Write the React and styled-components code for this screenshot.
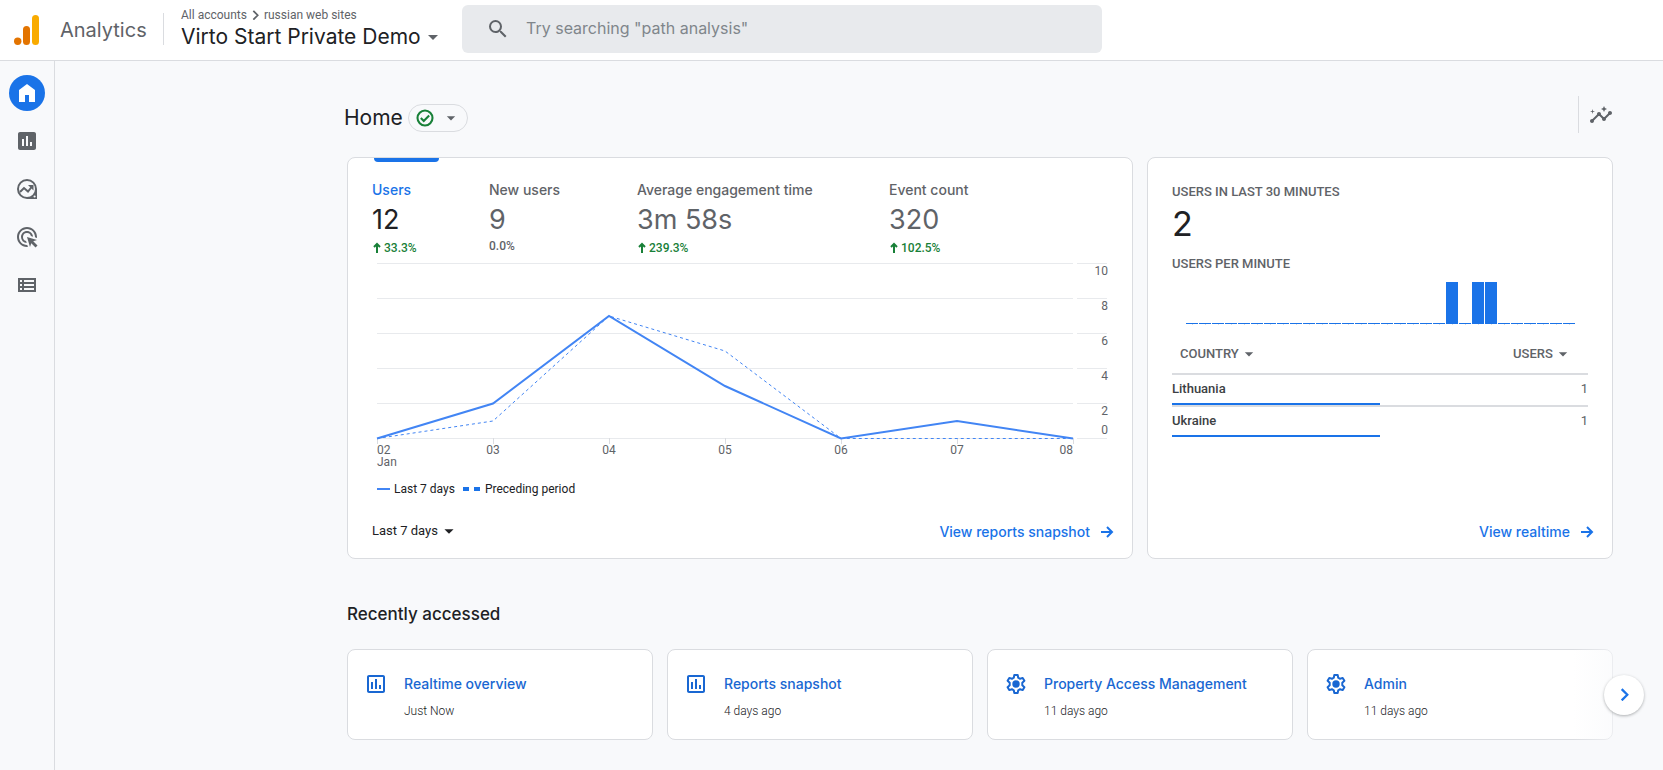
import React, { useState } from "react";
import styled, { createGlobalStyle } from "styled-components";
import {
  MdAdsClick,
  MdArrowDropDown,
  MdAssessment,
  MdInsights,
  MdOutlineAssessment,
  MdSearch
} from "react-icons/md";

const GlobalStyle = createGlobalStyle`
  * {
    box-sizing: border-box;
  }
  body {
    margin: 0;
    background: #f8f9fb;
    color: #202124;
    font-family: Roboto, sans-serif;
    font-size: 12px;
    line-height: 16px;
  }
  button, input, select {
    font: inherit;
    color: inherit;
    background: none;
    border: 0;
    padding: 0;
    margin: 0;
  }
  button {
    cursor: pointer;
  }
  svg {
    display: block;
    flex-shrink: 0;
  }
`;

const display = "Inter, Roboto, sans-serif";

/* header */

const Header = styled.header`
  display: flex;
  align-items: flex-start;
  height: 61px;
  padding-left: 14px;
  background: #fff;
  border-bottom: 1px solid #dadce0;
`;

const Brand = styled.a`
  display: flex;
  align-items: center;
  gap: 20px;
  width: 149px;
  height: 59px;
  flex-shrink: 0;
  color: #5f6368;
  font-family: ${display};
  font-size: 20px;
  text-decoration: none;
`;

const Account = styled.div`
  width: 274px;
  height: 32px;
  margin: 13px 25px 0 0;
  padding-left: 17px;
  border-left: 1px solid #dadce0;
  flex-shrink: 0;
`;

const Crumbs = styled.nav`
  display: flex;
  align-items: center;
  gap: 5px;
  margin-top: -6px;
  color: #5f6368;

  a {
    color: inherit;
    text-decoration: none;
  }
`;

const PropertyButton = styled.button`
  display: flex;
  align-items: center;
  font-family: ${display};
  font-size: 21px;
  line-height: 28px;
  white-space: nowrap;

  svg {
    color: #5f6368;
  }
`;

const SearchBox = styled.label`
  display: flex;
  align-items: center;
  gap: 16px;
  flex: 0 1 640px;
  height: 48px;
  margin-top: 5px;
  padding: 0 24px;
  border-radius: 6px;
  background: #e8eaed;
  color: #5f6368;
`;

const SearchInput = styled.input`
  flex: 1;
  min-width: 0;
  height: 44px;
  padding-bottom: 3px;
  font-family: ${display};
  font-size: 16px;
  outline: none;

  &::placeholder {
    color: #80868b;
    opacity: 1;
  }
`;

/* page */

const Layout = styled.div`
  display: flex;
  min-height: calc(100vh - 61px);
`;

const Sidebar = styled.nav`
  display: flex;
  flex-direction: column;
  align-items: center;
  gap: 12px;
  width: 55px;
  padding-top: 14px;
  border-right: 1px solid #dadce0;
  flex-shrink: 0;
`;

const NavLink = styled.a`
  display: flex;
  align-items: center;
  justify-content: center;
  width: 36px;
  height: 36px;
  border-radius: 50%;
  color: ${props => (props.$active ? "#fff" : "#5f6368")};
  background: ${props => (props.$active ? "#1a73e8" : "none")};
`;

const Main = styled.main`
  flex: 1;
  min-width: 0;
  padding: 35px 50px 30px 289px;
`;

const TitleRow = styled.div`
  display: flex;
  justify-content: space-between;
  height: 61px;
`;

const TitleGroup = styled.div`
  display: flex;
  align-items: center;
  gap: 5px;
  height: 44px;
`;

const PageTitle = styled.h1`
  margin: 0;
  font-family: ${display};
  font-size: 21px;
  font-weight: 400;
  line-height: 28px;
`;

const StatusButton = styled.button`
  display: flex;
  align-items: center;
  justify-content: space-between;
  width: 60px;
  height: 28px;
  padding: 0 6px;
  border: 1px solid #dadce0;
  border-radius: 14px;
  color: #5f6368;
`;

const InsightsButton = styled.button`
  height: 37px;
  padding-left: 10px;
  border-left: 1px solid #dadce0;
  color: #5f6368;
`;

const Cards = styled.div`
  display: grid;
  grid-template-columns: minmax(0, 786fr) minmax(0, 466fr);
  gap: 14px;
  margin-left: 3px;
`;

const Card = styled.section`
  display: flex;
  flex-direction: column;
  min-height: 402px;
  border: 1px solid #dadce0;
  border-radius: 8px;
  background: #fff;
`;

const CardBody = styled.div`
  flex: 1;
  padding: 0 24px;
`;

const CardFooter = styled.div`
  display: flex;
  justify-content: space-between;
  align-items: flex-start;
  padding: 0 16px 14px 24px;
`;

const CardLink = styled.a`
  display: flex;
  align-items: center;
  gap: 8px;
  margin-left: auto;
  color: #1a73e8;
  font-family: ${display};
  font-size: 14px;
  font-weight: 500;
  line-height: 24px;
  text-decoration: none;
`;

const SelectWrap = styled.span`
  display: inline-flex;
  align-items: center;

  select {
    appearance: none;
    outline: none;
  }
`;

const RangeSelect = styled(SelectWrap)`
  font-size: 13px;
  line-height: 20px;
`;

/* overview card */

const ActiveTab = styled.div`
  width: 65px;
  height: 4px;
  margin-left: 2px;
  border-radius: 0 0 4px 4px;
  background: #1a73e8;
`;

const Metrics = styled.div`
  display: grid;
  grid-template-columns: 117px 148px 252px auto;
  padding-top: 18px;
`;

const Metric = styled.button`
  display: flex;
  flex-direction: column;
  align-items: flex-start;
  color: #5f6368;
  text-align: left;
  white-space: nowrap;
`;

const MetricLabel = styled.span`
  color: ${props => (props.$active ? "#1a73e8" : "#5f6368")};
  font-family: ${display};
  font-size: 14px;
  font-weight: 500;
  line-height: 20px;
`;

const MetricValue = styled.span`
  padding-top: 2px;
  color: ${props => (props.$active ? "#202124" : "#5f6368")};
  font-family: ${display};
  font-size: 27px;
  line-height: 36px;
`;

const Delta = styled.span`
  display: flex;
  align-items: center;
  gap: 2px;
  padding-top: ${props => (props.$up ? "2px" : "0")};
  color: ${props => (props.$up ? "#188038" : "#5f6368")};
  font-weight: 500;
`;

const Chart = styled.svg`
  width: 100%;
  overflow: visible;

  text {
    fill: #5f6368;
    font-family: Roboto, sans-serif;
    font-size: 12px;
  }
`;

const Legend = styled.div`
  display: flex;
  align-items: center;
  gap: 4px;
  margin: 11px 0 0 5px;
`;

const LegendItem = styled.span`
  display: flex;
  align-items: center;
  gap: 4px;
  margin-right: 4px;
`;

/* realtime card */

const Caption = styled.h2`
  margin: 0;
  padding-top: ${props => (props.$first ? "26px" : "12px")};
  color: #5f6368;
  font-size: 13px;
  font-weight: 500;
  line-height: 16px;
  text-transform: uppercase;
`;

const BigNumber = styled.div`
  margin-top: 4px;
  font-family: ${display};
  font-size: 34px;
  line-height: 40px;
`;

const Minutes = styled.div`
  padding: 10px 12px 0 14px;

  svg {
    width: 100%;
  }
`;

const CountryTable = styled.table`
  width: 100%;
  margin-top: 10px;
  border-spacing: 0;
  font-size: 13px;

  th, td {
    padding: 0;
    text-align: left;
  }
  th:last-child, td:last-child {
    text-align: right;
  }
`;

const HeadCell = styled.th`
  height: 40px;
  border-bottom: 2px solid #dadce0;
  color: #5f6368;
  font-weight: 500;

  ${SelectWrap} {
    margin: 0 15px 0 8px;
  }
`;

const CountryRow = styled.tr`
  background-image: linear-gradient(#1a73e8, #1a73e8);
  background-position: 0 28px;
  background-repeat: no-repeat;

  td {
    height: 32px;
    padding: 6px 0 8px;
    border-bottom: 2px solid #dadce0;
    color: #3c4043;
    font-weight: 500;
  }
  td:last-child {
    color: #5f6368;
    font-weight: 400;
  }
  &:last-child td {
    height: 30px;
    border-bottom: 0;
  }
`;

/* recently accessed */

const SectionTitle = styled.h2`
  margin: 43px 0 23px 3px;
  font-family: ${display};
  font-size: 17px;
  font-weight: 500;
  line-height: 24px;
`;

const Recent = styled.div`
  position: relative;
  display: grid;
  grid-template-columns: repeat(4, minmax(0, 1fr));
  gap: 14px;
  margin-left: 3px;

  &::after {
    content: "";
    position: absolute;
    top: 0;
    right: 0;
    bottom: 0;
    width: 40px;
    background: linear-gradient(90deg, rgba(248, 249, 251, 0), rgba(248, 249, 251, 0.6));
    pointer-events: none;
  }
`;

const RecentCard = styled.a`
  display: flex;
  gap: 16px;
  padding: 22px 16px 20px;
  border: 1px solid #dadce0;
  border-radius: 8px;
  background: #fff;
  color: #1967d2;
  text-decoration: none;
`;

const RecentName = styled.div`
  font-family: ${display};
  font-size: 14px;
  font-weight: 500;
  line-height: 24px;
`;

const RecentTime = styled.div`
  margin-top: 7px;
  color: #202124;
  font-weight: 300;
`;

const NextButton = styled.button`
  position: absolute;
  z-index: 1;
  top: 50%;
  right: -31px;
  display: flex;
  align-items: center;
  justify-content: center;
  width: 40px;
  height: 40px;
  margin-top: -20px;
  border-radius: 50%;
  background: #fff;
  color: #1a73e8;
  box-shadow: 0 1px 3px rgba(60, 64, 67, 0.4);
`;

/* icons */

const LogoIcon = () => (
  <svg width="26" height="30" viewBox="0 0 26 30">
    <rect x="18" y="0" width="7" height="30" rx="3.500" fill="#f9ab00" />
    <rect x="9" y="11" width="7" height="19" rx="3.500" fill="#e37400" />
    <circle cx="3.700" cy="26.300" r="3.700" fill="#e37400" />
  </svg>
);

const HomeIcon = () => (
  <svg width="24" height="24" viewBox="0 0 24 24" fill="currentColor">
    <path d="M4 21V9l8-6 8 6v12h-6v-7h-4v7z" />
  </svg>
);

const ExploreIcon = () => (
  <svg width="24" height="24" viewBox="0 0 24 24">
    <path
      fill="currentColor"
      fillRule="evenodd"
      d="M12 2a10 10 0 0 1 10 10v10H12a10 10 0 0 1 0-20zm0 2a8 8 0 1 0 0 16 8 8 0 0 0 0-16zm7.600 14.400a1.100 1.100 0 1 0 0 2.200 1.100 1.100 0 0 0 0-2.200z"
    />
    <path fill="none" stroke="currentColor" strokeWidth="2" d="M5 15l4-4 4 3.500 4-5" />
    <path fill="currentColor" d="M13 8h5.500v5.500z" />
  </svg>
);

const ListIcon = () => (
  <svg width="24" height="24" viewBox="0 0 24 24" fill="none" stroke="currentColor" strokeWidth="2">
    <path d="M4 6h16v12H4zM8 6v12M4 10h16M4 14h16" />
  </svg>
);

const CheckIcon = () => (
  <svg width="20" height="20" viewBox="0 0 24 24" fill="none" stroke="#188038" strokeWidth="2.500">
    <circle cx="12" cy="12" r="9" />
    <path d="M7 12l3.500 3.500L17 9" />
  </svg>
);

const UpIcon = () => (
  <svg width="10" height="12" viewBox="0 0 10 12" fill="none" stroke="currentColor" strokeWidth="2">
    <path d="M5 11V2M2 5l3-3 3 3" />
  </svg>
);

const ArrowIcon = () => (
  <svg width="18" height="18" viewBox="0 0 18 18" fill="none" stroke="currentColor" strokeWidth="2">
    <path d="M3 9h11M9 4l5 5-5 5" />
  </svg>
);

const ChevronIcon = ({ size }) => (
  <svg
    width={size}
    height={(size * 3) / 2}
    viewBox="0 0 8 12"
    fill="none"
    stroke="currentColor"
    strokeWidth="2"
  >
    <path d="M1.500 1l5 5-5 5" />
  </svg>
);

const GearIcon = () => (
  <svg width="24" height="24" viewBox="0 0 24 24">
    <path
      fill="none"
      stroke="currentColor"
      strokeWidth="2"
      strokeLinejoin="round"
      d="M10.300 3h3.400l.5 2.700 1.900 1.100 2.600-.9 1.700 2.900-2.100 1.900v2.600l2.100 1.900-1.700 2.900-2.600-.9-1.900 1.100-.5 2.700h-3.400l-.5-2.700-1.900-1.100-2.600.9-1.700-2.900 2.100-1.900v-2.600L3.600 8.800l1.700-2.900 2.600.9 1.900-1.100z"
    />
    <circle cx="12" cy="12" r="3.700" fill="currentColor" />
  </svg>
);

/* data */

const navItems = [
  { label: "Home", icon: <HomeIcon />, active: true },
  { label: "Reports", icon: <MdAssessment size={24} /> },
  { label: "Explore", icon: <ExploreIcon /> },
  { label: "Advertising", icon: <MdAdsClick size={24} /> },
  { label: "Library", icon: <ListIcon /> }
];

const metrics = [
  { label: "Users", value: "12", delta: "33.3%", up: true, active: true },
  { label: "New users", value: "9", delta: "0.0%" },
  { label: "Average engagement time", value: "3m 58s", delta: "239.3%", up: true },
  { label: "Event count", value: "320", delta: "102.5%", up: true }
];

const days = ["02", "03", "04", "05", "06", "07", "08"];
const current = [0, 2, 7, 3, 0, 1, 0];
const preceding = [0, 1, 7, 5, 0, 0, 0];
const scale = [10, 8, 6, 4, 2, 0];

const perMinute = Array.from({ length: 30 }, (_, i) => ([20, 22, 23].includes(i) ? 1 : 0));

const countries = [
  { name: "Lithuania", users: 1 },
  { name: "Ukraine", users: 1 }
];

const recent = [
  { name: "Realtime overview", time: "Just Now", report: true },
  { name: "Reports snapshot", time: "4 days ago", report: true },
  { name: "Property Access Management", time: "11 days ago" },
  { name: "Admin", time: "11 days ago" }
];

const xAt = i => 5 + i * 116;
const yAt = v => 182 - v * 17.5;
const toPoints = values => values.map((v, i) => `${xAt(i)},${yAt(v) + 0.5}`).join(" ");

const dayAnchor = i => {
  if (i === 0) return "start";
  return i === days.length - 1 ? "end" : "middle";
};

const UsersChart = () => (
  <Chart viewBox="0 0 736 214" role="img" aria-label="Users, last 7 days">
    {scale.map(v => (
      <g key={v}>
        <path d={`M5 ${yAt(v) + 0.5}H701M705 ${yAt(v) + 0.5}H735`} stroke="#e8eaed" />
        <text x="736" y={v === 0 ? 178 : yAt(v) + 12} textAnchor="end">
          {v}
        </text>
      </g>
    ))}
    {days.map((day, i) => (
      <g key={day}>
        <path d={`M${xAt(i) + 0.5} 182v6`} stroke="#dadce0" />
        <text x={i === 0 ? 5 : xAt(i)} y="198" textAnchor={dayAnchor(i)}>
          {day}
        </text>
      </g>
    ))}
    <text x="5" y="210">
      Jan
    </text>
    <polyline
      points={toPoints(preceding)}
      fill="none"
      stroke="#4285f4"
      strokeDasharray="3 3"
    />
    <polyline points={toPoints(current)} fill="none" stroke="#4285f4" strokeWidth="2" />
  </Chart>
);

const Dropdown = ({ label, text }) => (
  <SelectWrap>
    <select aria-label={label}>
      <option>{text}</option>
    </select>
    <MdArrowDropDown size={20} />
  </SelectWrap>
);

const App = () => {
  const [query, setQuery] = useState("");

  return (
    <>
      <GlobalStyle />
      <Header>
        <Brand href="#home">
          <LogoIcon />
          Analytics
        </Brand>
        <Account>
          <Crumbs>
            <a href="#accounts">All accounts</a>
            <ChevronIcon size={7} />
            <a href="#account">russian web sites</a>
          </Crumbs>
          <PropertyButton type="button">
            Virto Start Private Demo
            <MdArrowDropDown size={24} />
          </PropertyButton>
        </Account>
        <SearchBox>
          <MdSearch size={24} />
          <SearchInput
            type="text"
            aria-label="Search"
            placeholder={'Try searching "path analysis"'}
            value={query}
            onChange={e => setQuery(e.target.value)}
          />
        </SearchBox>
      </Header>
      <Layout>
        <Sidebar>
          {navItems.map(item => (
            <NavLink key={item.label} href="#nav" aria-label={item.label} $active={item.active}>
              {item.icon}
            </NavLink>
          ))}
        </Sidebar>
        <Main>
          <TitleRow>
            <TitleGroup>
              <PageTitle>Home</PageTitle>
              <StatusButton type="button" aria-label="Data quality">
                <CheckIcon />
                <MdArrowDropDown size={20} />
              </StatusButton>
            </TitleGroup>
            <InsightsButton type="button" aria-label="Insights">
              <MdInsights size={24} />
            </InsightsButton>
          </TitleRow>
          <Cards>
            <Card>
              <CardBody>
                <ActiveTab />
                <Metrics>
                  {metrics.map(m => (
                    <Metric key={m.label} type="button">
                      <MetricLabel $active={m.active}>{m.label}</MetricLabel>
                      <MetricValue $active={m.active}>{m.value}</MetricValue>
                      <Delta $up={m.up}>
                        {m.up && <UpIcon />}
                        {m.delta}
                      </Delta>
                    </Metric>
                  ))}
                </Metrics>
                <UsersChart />
                <Legend>
                  <LegendItem>
                    <svg width="13" height="4">
                      <path d="M0 2h13" stroke="#4285f4" strokeWidth="2" />
                    </svg>
                    Last 7 days
                  </LegendItem>
                  <LegendItem>
                    <svg width="18" height="4">
                      <path d="M0 2h18" stroke="#1a73e8" strokeWidth="4" strokeDasharray="6 5" />
                    </svg>
                    Preceding period
                  </LegendItem>
                </Legend>
              </CardBody>
              <CardFooter>
                <RangeSelect>
                  <select aria-label="Date range">
                    <option>Last 7 days</option>
                  </select>
                  <MdArrowDropDown size={22} />
                </RangeSelect>
                <CardLink href="#snapshot">
                  View reports snapshot
                  <ArrowIcon />
                </CardLink>
              </CardFooter>
            </Card>
            <Card>
              <CardBody>
                <Caption $first>Users in last 30 minutes</Caption>
                <BigNumber>2</BigNumber>
                <Caption>Users per minute</Caption>
                <Minutes>
                  <svg viewBox="0 0 390 43" role="img" aria-label="Users per minute">
                    {perMinute.map((v, i) => (
                      <g key={i}>
                        <rect x={i * 13 + 6} y="42" width="1" height="1" fill="#dadce0" />
                        <rect
                          x={i * 13}
                          y={v ? 0 : 41}
                          width="12"
                          height={v ? 42 : 1}
                          fill="#1a73e8"
                        />
                      </g>
                    ))}
                  </svg>
                </Minutes>
                <CountryTable>
                  <thead>
                    <tr>
                      <HeadCell>
                        <Dropdown label="Dimension" text="COUNTRY" />
                      </HeadCell>
                      <HeadCell>
                        <Dropdown label="Measure" text="USERS" />
                      </HeadCell>
                    </tr>
                  </thead>
                  <tbody>
                    {countries.map(c => (
                      <CountryRow
                        key={c.name}
                        style={{ backgroundSize: `${(c.users / 2) * 100}% 2px` }}
                      >
                        <td>{c.name}</td>
                        <td>{c.users}</td>
                      </CountryRow>
                    ))}
                  </tbody>
                </CountryTable>
              </CardBody>
              <CardFooter>
                <CardLink href="#realtime">
                  View realtime
                  <ArrowIcon />
                </CardLink>
              </CardFooter>
            </Card>
          </Cards>
          <SectionTitle>Recently accessed</SectionTitle>
          <Recent>
            {recent.map(item => (
              <RecentCard key={item.name} href="#recent">
                {item.report ? <MdOutlineAssessment size={24} /> : <GearIcon />}
                <div>
                  <RecentName>{item.name}</RecentName>
                  <RecentTime>{item.time}</RecentTime>
                </div>
              </RecentCard>
            ))}
            <NextButton type="button" aria-label="Next">
              <ChevronIcon size={9} />
            </NextButton>
          </Recent>
        </Main>
      </Layout>
    </>
  );
};

export default App;
